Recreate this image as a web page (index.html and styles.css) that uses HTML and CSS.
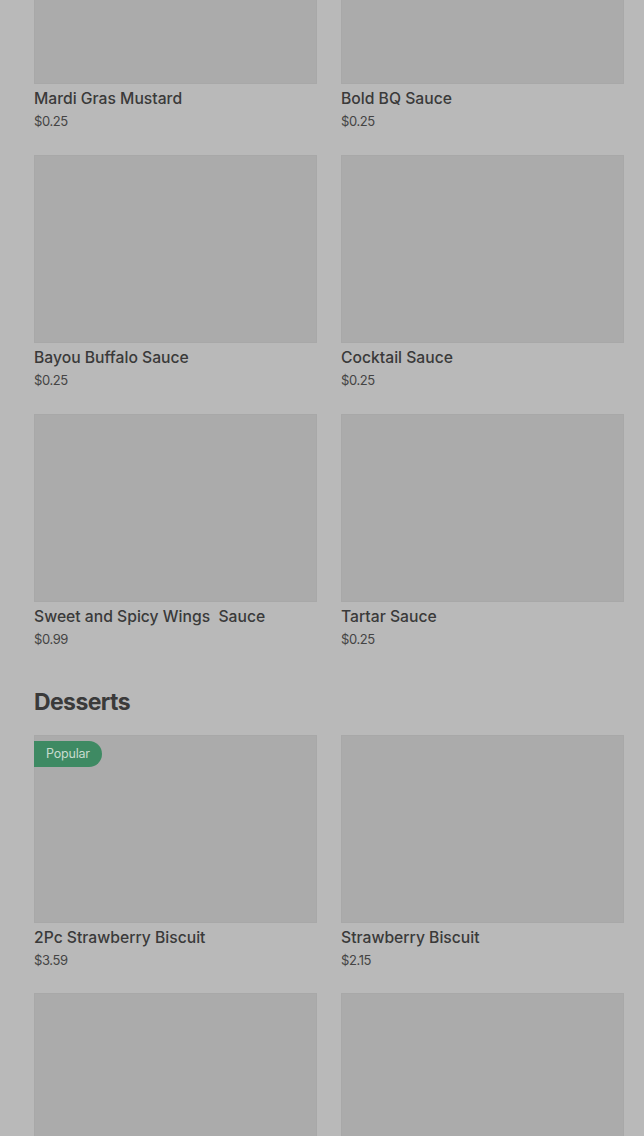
FILE: index.html
```html
<!DOCTYPE html>
<html>
<head>
<meta charset="utf-8">
<link rel="stylesheet" href="styles.css">
</head>
<body>
<div class="page">
  <div class="grid first">
    <div class="card"><div class="img"></div><div class="title">Mardi Gras Mustard</div><div class="price">$0.25</div></div>
    <div class="card"><div class="img"></div><div class="title">Bold BQ Sauce</div><div class="price">$0.25</div></div>
    <div class="card"><div class="img"></div><div class="title">Bayou Buffalo Sauce</div><div class="price">$0.25</div></div>
    <div class="card"><div class="img"></div><div class="title">Cocktail Sauce</div><div class="price">$0.25</div></div>
    <div class="card"><div class="img"></div><div class="title">Sweet and Spicy Wings&nbsp; Sauce</div><div class="price">$0.99</div></div>
    <div class="card"><div class="img"></div><div class="title">Tartar Sauce</div><div class="price">$0.25</div></div>
  </div>
  <h2 class="section">Desserts</h2>
  <div class="grid desserts">
    <div class="card"><div class="img"><span class="badge">Popular</span></div><div class="title">2Pc Strawberry Biscuit</div><div class="price">$3.59</div></div>
    <div class="card"><div class="img"></div><div class="title">Strawberry Biscuit</div><div class="price">$2.15</div></div>
    <div class="card"><div class="img"></div></div>
    <div class="card"><div class="img"></div></div>
  </div>
</div>
</body>
</html>
```
FILE: styles.css
```css
html, body {
  margin: 0;
  padding: 0;
  background: #b9b9b9;
  overflow: hidden;
}
body {
  font-family: Inter, "Liberation Sans", sans-serif;
  color: #3b3b3b;
  height: 1136px;
}
.page {
  padding: 0 20px 0 34px;
}
.grid {
  display: grid;
  grid-template-columns: 283px 283px;
  column-gap: 24px;
  row-gap: 0;
}
.grid.first {
  margin-top: -104px;
}
.card {
  height: 259px;
}
.desserts .card {
  height: 258px;
}
.img {
  position: relative;
  height: 188px;
  background: #ababab;
  box-shadow: inset 0 0 0 1px #a8a8a8;
}
.badge {
  position: absolute;
  left: 0;
  top: 6px;
  height: 26px;
  line-height: 26px;
  padding: 0 12px;
  background: #3e8a63;
  color: #c8dccf;
  font-size: 12.5px;
  letter-spacing: -0.2px;
  border-radius: 0 13px 13px 0;
}
.title {
  margin-top: 5px;
  font-size: 15.7px;
  line-height: 20px;
  font-weight: 500;
  color: #3a3a3a;
}
.price {
  margin-top: 3px;
  font-size: 13px;
  line-height: 18px;
  letter-spacing: -0.4px;
  color: #444444;
}
.section {
  margin: 0;
  padding: 11px 0 15px;
  height: 36px;
  line-height: 36px;
  font-size: 23px;
  font-weight: 700;
  color: #3a3a3a;
  letter-spacing: -0.6px;
}
```
